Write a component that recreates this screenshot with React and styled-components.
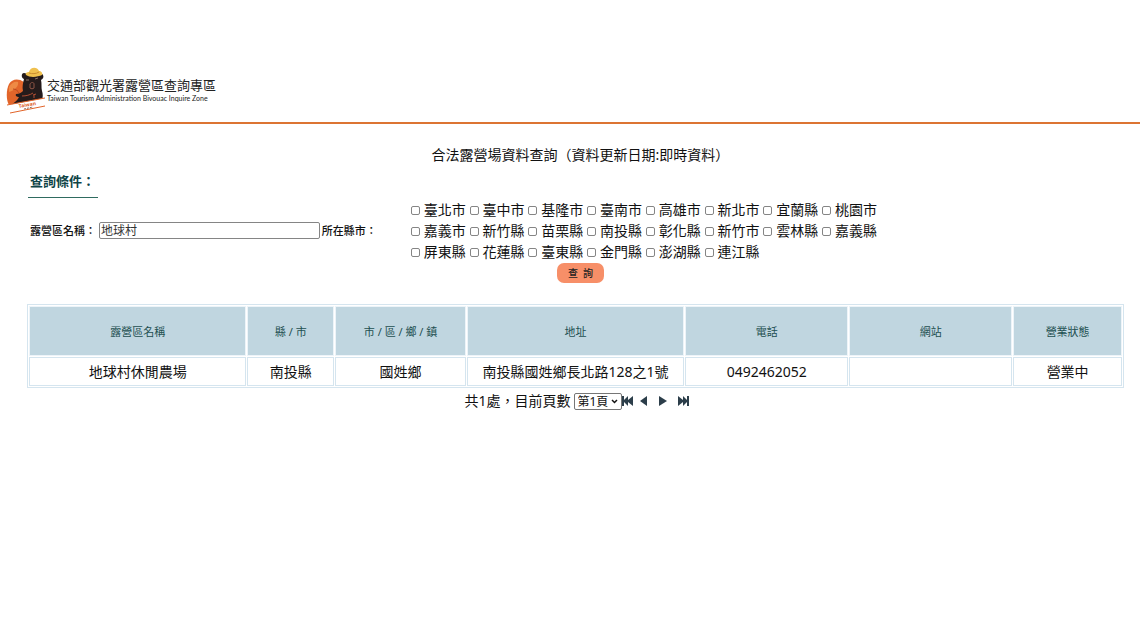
import React, { useState } from "react"
import styled, { createGlobalStyle } from "styled-components"

const GlobalStyle = createGlobalStyle`
  * {
    box-sizing: border-box;
  }
  body {
    margin: 0;
    background: #fff;
    color: #111;
    font-family: "Noto Sans", "Noto Sans CJK TC", sans-serif;
    font-size: 14px;
    line-height: 21px;
  }
`

const Header = styled.header`
  padding: 66px 6px 8px;
  border-bottom: 2px solid #dc7433;
`

const Brand = styled.a`
  display: flex;
  align-items: flex-start;
  gap: 1px;
  color: #222;
  text-decoration: none;

  svg {
    display: block;
    width: 40px;
    height: 48px;
  }
`

const BrandText = styled.span`
  display: flex;
  flex-direction: column;
  padding-top: 10px;
`

const BrandName = styled.span`
  font-size: 13px;
  line-height: 18px;
`

const BrandSub = styled.span`
  font-family: Lato, sans-serif;
  font-size: 7px;
  line-height: 8px;
`

const Main = styled.main`
  padding: 20px 16px 0 27px;
`

const Search = styled.form`
  display: flex;
  flex-direction: column;
  align-items: center;
  margin-right: -10px;
`

const Title = styled.h1`
  margin: 0;
  font-size: 14px;
  font-weight: 400;
`

const Subtitle = styled.h2`
  align-self: flex-start;
  margin: 5px 0 0 1px;
  padding: 1px 3px 5px 2px;
  border-bottom: 1px solid #2f6b60;
  color: #0f4446;
  font-size: 13px;
  font-weight: 700;
`

const Fields = styled.div`
  display: flex;
  align-items: center;
  align-self: stretch;
  margin-top: 1px;
  padding-left: 3px;
`

const Label = styled.label`
  font-size: 11px;
  font-weight: 500;
  white-space: nowrap;
`

const NameInput = styled.input`
  width: 20%;
  height: 17px;
  margin: 0 2px 0 3px;
  padding: 0 1px;
  border: 1px solid #858585;
  border-radius: 2px;
  color: #333;
  font: inherit;
  font-size: 12px;
`

const Cities = styled.fieldset`
  display: grid;
  grid-template-columns: repeat(8, 1fr);
  width: 470px;
  margin: 0 0 0 34px;
  padding: 0;
  border: 0;
`

const City = styled.label`
  display: flex;
  align-items: center;
  white-space: nowrap;

  input {
    appearance: none;
    width: 9px;
    height: 9px;
    margin: 1px 4px 0 0;
    border: 1px solid #858585;
    border-radius: 2px;
    background: #fff;
  }
  input:checked {
    background: #0075ff;
  }
`

const SearchButton = styled.button`
  height: 20px;
  margin-top: 1px;
  padding: 0 11px;
  border: 0;
  border-radius: 7px;
  background: #f78f68;
  color: #222;
  font: inherit;
  font-size: 10px;
  font-weight: 500;
  white-space: pre;
`

const Results = styled.table`
  width: 100%;
  margin-top: 21px;
  border: 1px solid #d5e5ef;
  border-collapse: separate;
  border-spacing: 1px;
  table-layout: fixed;
  text-align: center;
`

const HeadCell = styled.th`
  width: ${props => props.$width};
  height: 50px;
  padding: 0;
  border: 1px solid #edf4f9;
  background: #c0d6e0;
  color: #1d4f50;
  font-size: 11px;
  font-weight: 400;
`

const Cell = styled.td`
  height: 29px;
  padding: 0;
  border: 1px solid #d5e5ef;
`

const Pager = styled.nav`
  display: flex;
  align-items: center;
  justify-content: center;
  margin-top: 2px;
  padding-left: 4px;
`

const SelectWrap = styled.span`
  display: grid;
  align-items: center;
  margin: 2px 0 0 3px;

  > * {
    grid-area: 1 / 1;
  }
  svg {
    justify-self: end;
    margin-right: 4px;
    pointer-events: none;
  }
`

const PageSelect = styled.select`
  appearance: none;
  width: 48px;
  height: 17px;
  padding: 0 3px;
  border: 1px solid #767676;
  border-radius: 2px;
  background: #fff;
  color: #111;
  font: inherit;
  font-size: 12px;
  line-height: 15px;
`

const PageButton = styled.button`
  display: flex;
  justify-content: center;
  width: ${props => (props.$edge ? "13px" : "19px")};
  margin-right: ${props => (props.$spaced ? "5px" : "0")};
  padding: 0;
  border: 0;
  background: none;
  color: #2c3e4a;

  svg {
    display: block;
    fill: currentColor;
  }
`

const cities = [
  "臺北市", "臺中市", "基隆市", "臺南市", "高雄市", "新北市", "宜蘭縣", "桃園市",
  "嘉義市", "新竹縣", "苗栗縣", "南投縣", "彰化縣", "新竹市", "雲林縣", "嘉義縣",
  "屏東縣", "花蓮縣", "臺東縣", "金門縣", "澎湖縣", "連江縣"
]

const columns = [
  { name: "露營區名稱", width: "20%" },
  { name: "縣 / 市", width: "8%" },
  { name: "市 / 區 / 鄉 / 鎮", width: "12%" },
  { name: "地址", width: "20%" },
  { name: "電話", width: "15%" },
  { name: "網站", width: "15%" },
  { name: "營業狀態", width: "10%" }
]

const rows = [
  ["地球村休閒農場", "南投縣", "國姓鄉", "南投縣國姓鄉長北路128之1號", "0492462052", "", "營業中"]
]

const BearLogo = () => (
  <svg viewBox="0 0 40 48" aria-hidden="true">
    <path d="M3 18C6 13 12 12 18 16L20 34 3 39C0 34 0 24 3 18Z" fill="#e2652a" />
    <path d="M3 21c2-4 6-6 9-5 1 4-3 8-9 10z" fill="#ee8a45" />
    <path d="M7 23c3 0 5 2 6 4" fill="none" stroke="#b9481e" strokeWidth="1" />
    <path
      d="M18 13c-3-1-3-6 0-6 2 0 3 1 4 2h10c1-2 4-2 5 0 1 2 0 4-2 5 1 4 0 7 1 11 1 3 1 6 0 9L5 39c4-3 7-5 8-8-2 0-4-1-3-3 3 0 5-1 7-3-1-4 0-8 1-12z"
      fill="#251b1b"
    />
    <path d="M20 9c-1-2 1-3 3-3 1-5 8-6 10-1 2 0 4 2 3 4-4 2-12 3-16 0z" fill="#efc04e" />
    <path d="M23 7c3 1 7 1 10-1" fill="none" stroke="#c98b2f" strokeWidth="1" />
    <path d="M20 14h3M29 13l3-1" stroke="#8c7467" strokeWidth="1" />
    <path d="M24 18c1-2 4-2 4 0v4c-1 1-3 1-4 0z" fill="none" stroke="#8d5546" strokeWidth="1" />
    <path d="M16 30c4 0 8-1 11-3M27 29l3-1M28 32v-3" fill="none" stroke="#b04d32" strokeWidth="1" />
    <path d="M2 39L39 32 39 40 4 47Z" fill="#fff" />
    <path d="M1 39L39 32M4 47L39 40" fill="none" stroke="#e2652a" strokeWidth="1" />
    <text x="13" y="42" fill="#dc5d2a" fontSize="5" fontWeight="700" transform="rotate(-10 13 42)">Taiwan</text>
    <path d="M18 43l9-2" stroke="#8a6a5c" strokeWidth="1" strokeDasharray="2 1" />
  </svg>
)

const icons = {
  first: { label: "第一頁", edge: true, width: 12, path: "M0 1h2v4l4-4v4l5-4v10l-5-4v4l-4-4v4H0z" },
  prev: { label: "上一頁", width: 8, path: "M0 6l7-5v10z" },
  next: { label: "下一頁", spaced: true, width: 8, path: "M0 1l8 5-8 5z" },
  last: { label: "最末頁", edge: true, width: 12, path: "M11 1H9v4L5 1v4L0 1v10l5-4v4l4-4v4h2z" }
}

const PageIcon = ({ icon }) => (
  <PageButton type="button" aria-label={icon.label} $edge={icon.edge} $spaced={icon.spaced}>
    <svg width={icon.width} height="12" viewBox={`0 0 ${icon.width} 12`}>
      <path d={icon.path} />
    </svg>
  </PageButton>
)

const App = () => {
  const [name, setName] = useState("地球村")

  return (
    <>
      <GlobalStyle />
      <Header>
        <Brand href="#">
          <BearLogo />
          <BrandText>
            <BrandName>交通部觀光署露營區查詢專區</BrandName>
            <BrandSub>Taiwan Tourism Administration Bivouac Inquire Zone</BrandSub>
          </BrandText>
        </Brand>
      </Header>
      <Main>
        <Search onSubmit={e => e.preventDefault()}>
          <Title>合法露營場資料查詢（資料更新日期:即時資料）</Title>
          <Subtitle>查詢條件：</Subtitle>
          <Fields>
            <Label htmlFor="camp-name">露營區名稱：</Label>
            <NameInput id="camp-name" value={name} onChange={e => setName(e.target.value)} />
            <Label as="span" id="city-label">所在縣市：</Label>
            <Cities aria-labelledby="city-label">
              {cities.map(city => (
                <City key={city}>
                  <input type="checkbox" name="city" value={city} />
                  {city}
                </City>
              ))}
            </Cities>
          </Fields>
          <SearchButton type="submit">查  詢</SearchButton>
        </Search>
        <Results>
          <thead>
            <tr>
              {columns.map(col => (
                <HeadCell key={col.name} $width={col.width}>{col.name}</HeadCell>
              ))}
            </tr>
          </thead>
          <tbody>
            {rows.map(row => (
              <tr key={row[0]}>
                {row.map((value, i) => <Cell key={i}>{value}</Cell>)}
              </tr>
            ))}
          </tbody>
        </Results>
        <Pager aria-label="分頁">
          <label htmlFor="page">共1處，目前頁數</label>
          <SelectWrap>
            <PageSelect id="page">
              <option>第1頁</option>
            </PageSelect>
            <svg width="7" height="5" viewBox="0 0 7 5" aria-hidden="true">
              <path d="M1 1l2.5 2.5L6 1" fill="none" stroke="#111" strokeWidth="1.5" />
            </svg>
          </SelectWrap>
          <PageIcon icon={icons.first} />
          <PageIcon icon={icons.prev} />
          <PageIcon icon={icons.next} />
          <PageIcon icon={icons.last} />
        </Pager>
      </Main>
    </>
  )
}

export default App
